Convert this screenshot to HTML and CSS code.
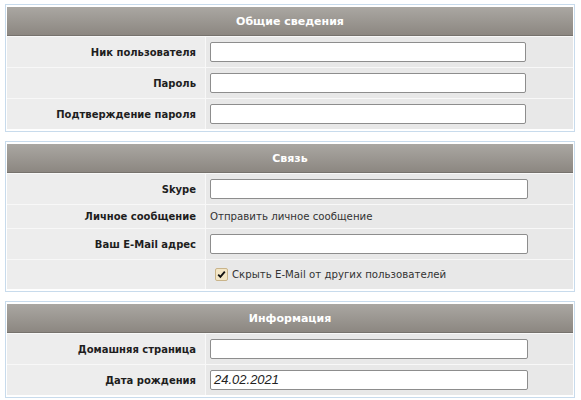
FILE: index.html
```html
<!DOCTYPE html>
<html lang="ru">
<head>
<meta charset="utf-8">
<title>Профиль</title>
<link rel="stylesheet" href="styles.css">
</head>
<body>
<div class="page">
  <section class="panel">
    <div class="panel-head">Общие сведения</div>
    <div class="row"><div class="label">Ник пользователя</div><div class="field"><span class="input"></span></div></div>
    <div class="row"><div class="label">Пароль</div><div class="field"><span class="input"></span></div></div>
    <div class="row"><div class="label">Подтверждение пароля</div><div class="field"><span class="input"></span></div></div>
  </section>

  <section class="panel">
    <div class="panel-head">Связь</div>
    <div class="row"><div class="label">Skype</div><div class="field"><span class="input wide"></span></div></div>
    <div class="row short"><div class="label">Личное сообщение</div><div class="field text">Отправить личное сообщение</div></div>
    <div class="row"><div class="label">Ваш E-Mail адрес</div><div class="field"><span class="input wide"></span></div></div>
    <div class="row check-row"><div class="label"></div><div class="field text"><span class="checkbox"><svg viewBox="0 0 11 11" width="11" height="11"><path d="M2.2 5.6 L4.4 7.9 L8.8 2.6" fill="none" stroke="#111" stroke-width="1.8"/></svg></span>Скрыть E-Mail от других пользователей</div></div>
  </section>

  <section class="panel">
    <div class="panel-head">Информация</div>
    <div class="row"><div class="label">Домашняя страница</div><div class="field"><span class="input wide"></span></div></div>
    <div class="row"><div class="label">Дата рождения</div><div class="field"><span class="input wide date">24.02.2021</span></div></div>
  </section>
</div>
</body>
</html>
```

FILE: styles.css
```css
html, body {
  margin: 0;
  padding: 0;
  background: #ffffff;
}

.page {
  padding: 4px 6px 0 5px;
  font-family: "DejaVu Sans", Verdana, sans-serif;
  font-size: 10px;
  color: #222;
}

.panel {
  border: 1px solid #c8dbec;
  padding: 2px 1px;
  margin-bottom: 9px;
  background: #fff;
}

.panel-head {
  height: 29px;
  box-sizing: border-box;
  background: linear-gradient(#aaa7a2, #8c8781);
  border-bottom: 1px solid #76726d;
  color: #fff;
  font-weight: bold;
  font-size: 11px;
  display: flex;
  align-items: center;
  justify-content: center;
}

.row {
  display: grid;
  grid-template-columns: 198px 1fr;
  border-top: 1px solid #f8f8f8;
  height: 31px;
  box-sizing: border-box;
}

.row.short {
  height: 24px;
}

.row.check-row {
  height: 30px;
}

.label {
  background: #ededed;
  font-weight: bold;
  font-size: 10px;
  color: #1e1e1e;
  text-align: right;
  padding-right: 9px;
  display: flex;
  align-items: center;
  justify-content: flex-end;
}

.field {
  background: #e8e8e8;
  border-left: 1px solid #f8f8f8;
  padding: 0 4px;
  display: flex;
  align-items: center;
}

.field.text {
  color: #333;
  font-weight: normal;
  font-size: 10.2px;
}

.input {
  display: block;
  width: 316px;
  height: 20px;
  box-sizing: border-box;
  border: 1px solid #8d8d8d;
  border-radius: 2px;
  background: #fff;
}

.input.wide {
  width: 318px;
}

.input.date {
  font-family: "Liberation Sans", Arial, sans-serif;
  font-style: italic;
  font-size: 13px;
  color: #222;
  padding-left: 3px;
  line-height: 18px;
}

.checkbox {
  display: inline-flex;
  align-items: center;
  justify-content: center;
  width: 11px;
  height: 11px;
  border: 1px solid #c9b48a;
  border-radius: 2px;
  background: #f3e6c6;
  margin: 0 4px 0 5px;
}
```
